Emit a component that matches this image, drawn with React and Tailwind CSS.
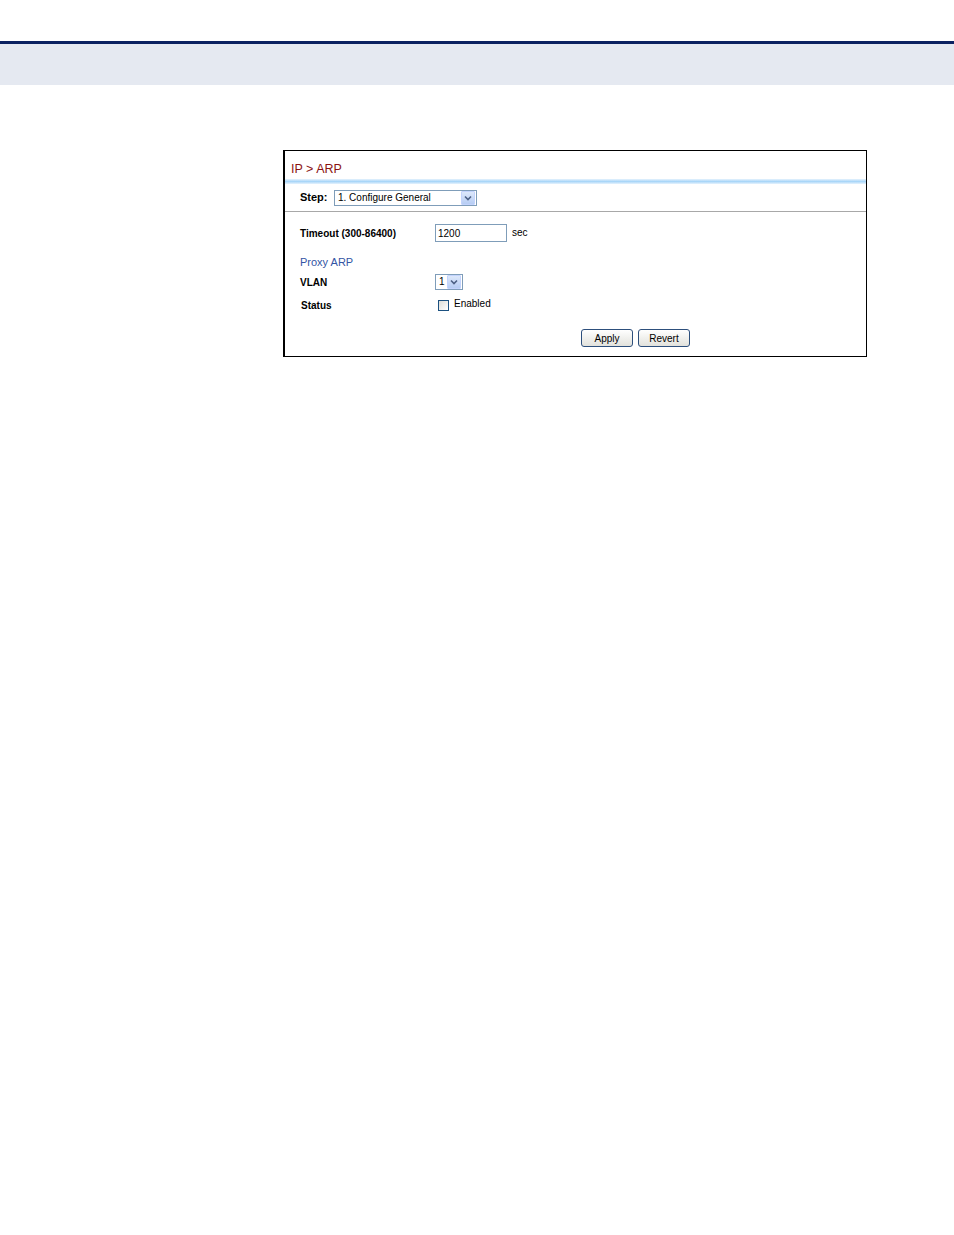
export default function App() {
    const font = { fontFamily: '"Liberation Sans", Arial, sans-serif' };

    return (
        <div className="min-h-[1235px] bg-white" style={font}>
            <div className="pt-[41px]">
                <div className="h-[3px] bg-[#0b2261]" />
                <div className="h-[41px] bg-[#e5e9f1]" />
            </div>

            <div className="ml-[283px] mt-[65px] w-[584px] h-[207px] border border-black border-l-2 flex flex-col">
                {/* title */}
                <div className="h-[28px] pl-[6px] pt-[12px] text-[12.5px] leading-[13px] text-[#8b1212]">
                    IP &gt; ARP
                </div>
                <div className="h-[5px] bg-gradient-to-b from-[#e6f3fd] via-[#a9d6f8] to-[#e6f3fd]" />

                {/* step */}
                <div className="h-[28px] flex items-center pl-[15px] border-b border-[#a8a8a8]">
                    <span className="text-[11px] font-bold text-black w-[34px]">Step:</span>
                    <div className="w-[143px] h-[16px] border border-[#7f9db9] flex items-center bg-white">
                        <span className="flex-1 pl-[3px] text-[10px] leading-[14px] text-black">1. Configure General</span>
                        <SelectArrow />
                    </div>
                </div>

                {/* timeout */}
                <div className="mt-[12px] h-[18px] flex items-center pl-[15px]">
                    <span className="w-[135px] text-[10px] font-bold text-black">Timeout (300-86400)</span>
                    <div className="w-[72px] h-[18px] border border-[#7f9db9] flex items-center pl-[2px] text-[10px] text-black">
                        1200
                    </div>
                    <span className="ml-[5px] -mt-[2px] text-[10px] text-black">sec</span>
                </div>

                {/* proxy arp */}
                <div className="mt-[13px] pl-[15px] text-[11px] leading-[14px] text-[#3354a4]">Proxy ARP</div>

                <div className="mt-[5px] h-[16px] flex items-center pl-[15px]">
                    <span className="w-[135px] text-[10px] font-bold text-black">VLAN</span>
                    <div className="w-[28px] h-[16px] border border-[#7f9db9] flex items-center bg-white">
                        <span className="flex-1 pl-[3px] text-[10px] leading-[14px] text-black">1</span>
                        <SelectArrow />
                    </div>
                </div>

                <div className="mt-[7px] h-[14px] flex items-center pl-[16px]">
                    <span className="w-[137px] mt-[2px] text-[10px] font-bold text-black">Status</span>
                    <div className="w-[11px] h-[11px] mt-[3px] border border-[#1c5180] bg-gradient-to-br from-[#dcdcd7] to-white" />
                    <span className="ml-[5px] -mt-[1px] text-[10px] text-black">Enabled</span>
                </div>

                {/* buttons */}
                <div className="mt-[18px] flex pl-[296px] gap-[5px]">
                    <Btn label="Apply" />
                    <Btn label="Revert" />
                </div>
            </div>
        </div>
    );
}

function SelectArrow() {
    return (
        <div className="w-[14px] h-[14px] mr-[1px] bg-gradient-to-b from-[#dde8fb] to-[#b7cdf4] border border-[#c3d3fd] rounded-[1px] flex items-center justify-center">
            <svg width="8" height="6" viewBox="0 0 8 6">
                <path d="M1 1.5 L4 4.5 L7 1.5" stroke="#4d6185" strokeWidth="1.6" fill="none" />
            </svg>
        </div>
    );
}

function Btn({ label }) {
    return (
        <div className="w-[52px] h-[18px] border border-[#2d4f7c] rounded-[3px] bg-gradient-to-b from-white to-[#e2e2dc] flex items-center justify-center text-[10px] text-black">
            {label}
        </div>
    );
}
